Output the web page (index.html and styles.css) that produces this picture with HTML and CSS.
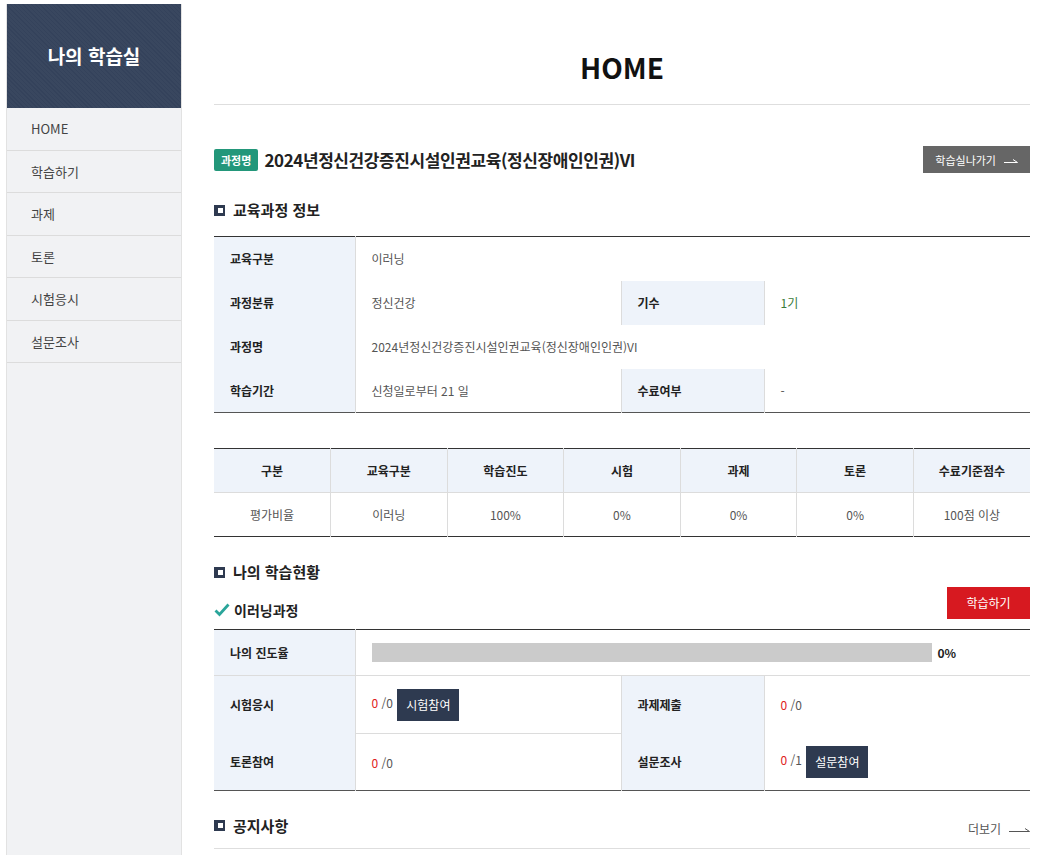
FILE: index.html
```html
<!DOCTYPE html>
<html lang="ko">
<head>
    <meta charset="UTF-8">
    <meta name="viewport" content="width=device-width, initial-scale=1.0">
    <title>나의 학습실 - HOME</title>
    <link rel="stylesheet" href="styles.css">
</head>
<body>
    <div class="wrap">
        <aside class="sidebar">
            <div class="side-title">나의 학습실</div>
            <ul class="side-menu">
                <li><a href="#">HOME</a></li>
                <li><a href="#">학습하기</a></li>
                <li><a href="#">과제</a></li>
                <li><a href="#">토론</a></li>
                <li><a href="#">시험응시</a></li>
                <li><a href="#">설문조사</a></li>
            </ul>
        </aside>

        <main class="content">
            <h1 class="page-title">HOME</h1>

            <div class="course-row">
                <div class="course-name">
                    <span class="badge">과정명</span>
                    <span class="course-title">2024년정신건강증진시설인권교육(정신장애인인권)VI</span>
                </div>
                <a href="#" class="btn-exit">학습실나가기
                    <svg width="14" height="8" viewBox="0 0 14 8"><path d="M0 6.5H13.5L9 3.5" fill="none" stroke="#fff" stroke-width="1"/></svg>
                </a>
            </div>

            <h2 class="sec-title">
                <svg width="11" height="11" viewBox="0 0 11 11"><rect width="11" height="11" fill="#2e3a50"/><rect x="4" y="3" width="5" height="5" fill="#fff"/></svg>
                교육과정 정보
            </h2>

            <table class="info-table">
                <colgroup>
                    <col style="width:141px"><col style="width:266px"><col style="width:143px"><col>
                </colgroup>
                <tr>
                    <th>교육구분</th>
                    <td colspan="3">이러닝</td>
                </tr>
                <tr>
                    <th>과정분류</th>
                    <td>정신건강</td>
                    <th class="mid">기수</th>
                    <td class="green">1기</td>
                </tr>
                <tr>
                    <th>과정명</th>
                    <td colspan="3">2024년정신건강증진시설인권교육(정신장애인인권)VI</td>
                </tr>
                <tr>
                    <th>학습기간</th>
                    <td>신청일로부터 21 일</td>
                    <th class="mid">수료여부</th>
                    <td>-</td>
                </tr>
            </table>

            <table class="score-table">
                <tr>
                    <th>구분</th>
                    <th>교육구분</th>
                    <th>학습진도</th>
                    <th>시험</th>
                    <th>과제</th>
                    <th>토론</th>
                    <th>수료기준점수</th>
                </tr>
                <tr>
                    <td>평가비율</td>
                    <td>이러닝</td>
                    <td>100%</td>
                    <td>0%</td>
                    <td>0%</td>
                    <td>0%</td>
                    <td>100점 이상</td>
                </tr>
            </table>

            <h2 class="sec-title sec-status">
                <svg width="11" height="11" viewBox="0 0 11 11"><rect width="11" height="11" fill="#2e3a50"/><rect x="4" y="3" width="5" height="5" fill="#fff"/></svg>
                나의 학습현황
            </h2>

            <div class="sub-row">
                <h3 class="sub-title">
                    <svg width="16" height="14" viewBox="0 0 16 14"><path d="M1.5 7.5L5.5 11.5L14.5 1.5" fill="none" stroke="#2aa59a" stroke-width="2.8"/></svg>
                    이러닝과정
                </h3>
                <a href="#" class="btn-study">학습하기</a>
            </div>

            <table class="status-table">
                <colgroup>
                    <col style="width:141px"><col style="width:266px"><col style="width:143px"><col>
                </colgroup>
                <tr class="row-progress">
                    <th>나의 진도율</th>
                    <td colspan="3">
                        <div class="progress">
                            <div class="bar"><span style="width:0%"></span></div>
                            <b>0%</b>
                        </div>
                    </td>
                </tr>
                <tr class="row-mid">
                    <th>시험응시</th>
                    <td class="line"><span class="red">0</span> /0 <a href="#" class="btn-dark">시험참여</a></td>
                    <th class="mid">과제제출</th>
                    <td><span class="red">0</span> /0</td>
                </tr>
                <tr class="row-last">
                    <th>토론참여</th>
                    <td><span class="red">0</span> /0</td>
                    <th class="mid">설문조사</th>
                    <td><span class="red">0</span> /1 <a href="#" class="btn-dark">설문참여</a></td>
                </tr>
            </table>

            <div class="notice-head">
                <h2 class="sec-title">
                    <svg width="11" height="11" viewBox="0 0 11 11"><rect width="11" height="11" fill="#2e3a50"/><rect x="4" y="3" width="5" height="5" fill="#fff"/></svg>
                    공지사항
                </h2>
                <a href="#" class="more">더보기
                    <svg width="21" height="8" viewBox="0 0 21 8"><path d="M0 6.5H20.5L16 3.5" fill="none" stroke="#555" stroke-width="1"/></svg>
                </a>
            </div>
        </main>
    </div>
</body>
</html>
```

FILE: styles.css
```css
* {
    margin: 0;
    padding: 0;
    box-sizing: border-box;
}

body {
    font-family: "Noto Sans CJK KR", "Noto Sans", sans-serif;
    font-size: 12px;
    color: #555;
    background-color: #fff;
}

a {
    text-decoration: none;
}

.wrap {
    display: flex;
    padding: 4px 12px 0 6px;
    min-height: 855px;
}

/* sidebar */
.sidebar {
    width: 176px;
    flex-shrink: 0;
    background-color: #f1f2f4;
    border-left: 1px solid #e2e2e2;
    border-right: 1px solid #e2e2e2;
}

.side-title {
    height: 104px;
    line-height: 104px;
    text-align: center;
    color: #fff;
    font-size: 19px;
    font-weight: bold;
    background-color: #36445d;
    background-image: repeating-linear-gradient(45deg, #34425b 0 1px, #39475f 1px 3px);
}

.side-menu {
    list-style: none;
}

.side-menu li {
    border-bottom: 1px solid #dcdcdc;
}

.side-menu a {
    display: block;
    height: 41.5px;
    line-height: 41.5px;
    padding-left: 24px;
    font-size: 13px;
    color: #444;
}

/* content */
.content {
    flex: 1;
    margin-left: 32px;
}

.page-title {
    text-align: center;
    font-size: 28px;
    line-height: 40px;
    color: #111;
    padding: 43px 0 17px;
    border-bottom: 1px solid #dedede;
}

.course-row {
    display: flex;
    justify-content: space-between;
    align-items: center;
    margin-top: 41px;
    height: 27px;
}

.course-name {
    display: flex;
    align-items: center;
}

.badge {
    display: inline-block;
    background-color: #23977a;
    color: #fff;
    font-size: 11px;
    font-weight: bold;
    line-height: 22px;
    padding: 0 7px;
    border-radius: 2px;
    margin-right: 6px;
}

.course-title {
    font-size: 17px;
    font-weight: bold;
    color: #222;
    letter-spacing: -0.4px;
}

.btn-exit {
    display: flex;
    align-items: center;
    gap: 8px;
    height: 27px;
    padding: 0 12px;
    background-color: #666;
    color: #fff;
    font-size: 11px;
}

.sec-title {
    display: flex;
    align-items: center;
    gap: 8px;
    font-size: 15px;
    line-height: 20px;
    color: #222;
    margin: 27px 0 16px;
}

/* info table */
table {
    width: 100%;
    border-collapse: collapse;
}

.info-table {
    border-top: 1px solid #333;
    border-bottom: 1px solid #555;
}

.info-table th,
.info-table td,
.status-table th,
.status-table td {
    height: 44px;
    padding: 0 16px;
    text-align: left;
    font-size: 12px;
}

.info-table th,
.status-table th {
    background-color: #eef3fa;
    color: #222;
    border-right: 1px solid #dcdcdc;
}

.info-table th.mid,
.status-table th.mid {
    border-left: 1px solid #dcdcdc;
}

.green {
    color: #3a7a3a;
}

/* score table */
.score-table {
    margin-top: 35px;
    table-layout: fixed;
    border-top: 1px solid #333;
    border-bottom: 1px solid #333;
}

.score-table th,
.score-table td {
    height: 44px;
    text-align: center;
    font-size: 12px;
    border-left: 1px solid #dcdcdc;
}

.score-table th:first-child,
.score-table td:first-child {
    border-left: none;
}

.score-table th {
    background-color: #eef3fa;
    color: #222;
    border-bottom: 1px solid #dcdcdc;
}

/* status */
.sec-status {
    margin: 25px 0 5px;
}

.sub-row {
    display: flex;
    justify-content: space-between;
    align-items: flex-end;
    height: 32px;
    margin-bottom: 10px;
}

.sub-title {
    display: flex;
    align-items: center;
    gap: 4px;
    font-size: 14px;
    line-height: 20px;
    color: #222;
    margin-bottom: -1px;
}

.btn-study {
    display: block;
    width: 83px;
    height: 32px;
    line-height: 32px;
    text-align: center;
    background-color: #d71920;
    color: #fff;
    font-size: 12px;
}

.status-table {
    border-top: 1px solid #333;
    border-bottom: 1px solid #555;
}

.status-table .row-progress th,
.status-table .row-progress td {
    height: 46px;
    border-bottom: 1px solid #dcdcdc;
}

.status-table .row-mid th,
.status-table .row-mid td {
    height: 58px;
}

.status-table .row-last th,
.status-table .row-last td {
    height: 57px;
}

.status-table td.line {
    border-bottom: 1px solid #dcdcdc;
}

.progress {
    display: flex;
    align-items: center;
    gap: 6px;
}

.bar {
    width: 560px;
    height: 19px;
    background-color: #cbcbcb;
}

.bar span {
    display: block;
    height: 100%;
    background-color: #2aa59a;
}

.progress b {
    color: #222;
    font-size: 12px;
}

.red {
    color: #e02020;
}

.btn-dark {
    display: inline-block;
    vertical-align: middle;
    height: 32px;
    line-height: 32px;
    padding: 0 9px;
    margin-left: 1px;
    background-color: #2e3a50;
    color: #fff;
    font-size: 12px;
}

/* notice */
.notice-head {
    display: flex;
    justify-content: space-between;
    align-items: center;
    margin-top: 23px;
    padding-bottom: 11px;
    border-bottom: 1px solid #dedede;
}

.notice-head .sec-title {
    margin: 0;
}

.more {
    display: flex;
    align-items: center;
    gap: 8px;
    color: #555;
    font-size: 12px;
    padding-top: 6px;
}
```
